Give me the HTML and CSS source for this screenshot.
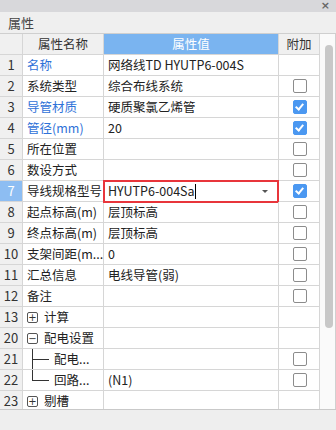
FILE: index.html
```html
<!DOCTYPE html>
<html>
<head>
    <meta charset="UTF-8">
    <title>属性</title>
    <link rel="stylesheet" href="styles.css">
</head>
<body>
    <!-- Window strip with close button -->
    <div class="top-bar"><span class="close">×</span></div>

    <!-- Panel title -->
    <div class="title-bar">属性</div>

    <!-- Property grid and scrollbar -->
    <div class="grid-area">
        <div class="grid">
            <div class="row head">
                <div class="cell idx"></div>
                <div class="cell name center">属性名称</div>
                <div class="cell value active center">属性值</div>
                <div class="cell attach">附加</div>
            </div>
            <div class="row">
                <div class="cell idx">1</div>
                <div class="cell name link">名称</div>
                <div class="cell value">网络线TD HYUTP6-004S</div>
                <div class="cell attach"></div>
            </div>
            <div class="row">
                <div class="cell idx">2</div>
                <div class="cell name">系统类型</div>
                <div class="cell value">综合布线系统</div>
                <div class="cell attach"><span class="check"></span></div>
            </div>
            <div class="row">
                <div class="cell idx">3</div>
                <div class="cell name link">导管材质</div>
                <div class="cell value">硬质聚氯乙烯管</div>
                <div class="cell attach"><span class="check on"></span></div>
            </div>
            <div class="row">
                <div class="cell idx">4</div>
                <div class="cell name link">管径(mm)</div>
                <div class="cell value">20</div>
                <div class="cell attach"><span class="check on"></span></div>
            </div>
            <div class="row">
                <div class="cell idx">5</div>
                <div class="cell name">所在位置</div>
                <div class="cell value"></div>
                <div class="cell attach"><span class="check"></span></div>
            </div>
            <div class="row">
                <div class="cell idx">6</div>
                <div class="cell name">数设方式</div>
                <div class="cell value"></div>
                <div class="cell attach"><span class="check"></span></div>
            </div>
            <div class="row">
                <div class="cell idx selected">7</div>
                <div class="cell name">导线规格型号</div>
                <div class="cell value editing">
                    <span>HYUTP6-004Sa</span><span class="caret"></span>
                    <span class="arrow"></span>
                    <span class="edit-box"></span>
                </div>
                <div class="cell attach"><span class="check on"></span></div>
            </div>
            <div class="row">
                <div class="cell idx">8</div>
                <div class="cell name">起点标高(m)</div>
                <div class="cell value">层顶标高</div>
                <div class="cell attach"><span class="check"></span></div>
            </div>
            <div class="row">
                <div class="cell idx">9</div>
                <div class="cell name">终点标高(m)</div>
                <div class="cell value">层顶标高</div>
                <div class="cell attach"><span class="check"></span></div>
            </div>
            <div class="row">
                <div class="cell idx">10</div>
                <div class="cell name">支架间距(m...</div>
                <div class="cell value">0</div>
                <div class="cell attach"><span class="check"></span></div>
            </div>
            <div class="row">
                <div class="cell idx">11</div>
                <div class="cell name">汇总信息</div>
                <div class="cell value">电线导管(弱)</div>
                <div class="cell attach"><span class="check"></span></div>
            </div>
            <div class="row">
                <div class="cell idx">12</div>
                <div class="cell name">备注</div>
                <div class="cell value"></div>
                <div class="cell attach"><span class="check"></span></div>
            </div>
            <div class="row">
                <div class="cell idx">13</div>
                <div class="cell name"><span class="toggle">+</span>计算</div>
                <div class="cell value"></div>
                <div class="cell attach"></div>
            </div>
            <div class="row">
                <div class="cell idx">20</div>
                <div class="cell name"><span class="toggle">−</span>配电设置</div>
                <div class="cell value"></div>
                <div class="cell attach"></div>
            </div>
            <div class="row">
                <div class="cell idx">21</div>
                <div class="cell name child"><span class="tree mid"></span>配电...</div>
                <div class="cell value"></div>
                <div class="cell attach"><span class="check"></span></div>
            </div>
            <div class="row">
                <div class="cell idx">22</div>
                <div class="cell name child"><span class="tree last"></span>回路...</div>
                <div class="cell value">(N1)</div>
                <div class="cell attach"><span class="check"></span></div>
            </div>
            <div class="row">
                <div class="cell idx">23</div>
                <div class="cell name"><span class="toggle">+</span>剔槽</div>
                <div class="cell value"></div>
                <div class="cell attach"></div>
            </div>
        </div>
        <div class="scrollbar"><div class="thumb"></div></div>
    </div>

    <!-- Empty footer strip -->
    <div class="footer"></div>
</body>
</html>
```

FILE: styles.css
```css
/* General Styling */
body {
    margin: 0;
    width: 336px;
    height: 430px;
    overflow: hidden;
    background-color: #eeeeee;
    font-family: 'Noto Sans CJK SC', 'Noto Sans', sans-serif;
    font-size: 12.5px;
    color: #222;
}

/* Top strip and title */
.top-bar {
    height: 12px;
    background-color: #d8d8db;
    display: flex;
    justify-content: flex-end;
    align-items: center;
}

.close {
    font-family: 'DejaVu Sans', sans-serif;
    font-size: 11px;
    line-height: 12px;
    color: #666;
    margin-right: 6px;
    font-weight: bold;
}

.title-bar {
    height: 21px;
    line-height: 21px;
    padding-left: 8px;
    background-color: #efefef;
    border-bottom: 1px solid #cfcfcf;
    color: #444;
    font-size: 13px;
}

/* Property grid */
.grid-area {
    display: flex;
    height: 375px;
    background-color: #fff;
    border-bottom: 1px solid #c9c9c9;
}

.grid {
    width: 320px;
    height: 375px;
    overflow: hidden;
}

.row {
    display: grid;
    grid-template-columns: 23px 81px 175px 41px;
    height: 21px;
}

.cell {
    box-sizing: border-box;
    height: 21px;
    line-height: 20px;
    border-right: 1px solid #d6d6d6;
    border-bottom: 1px solid #d6d6d6;
    white-space: nowrap;
    overflow: hidden;
}

.idx {
    background-color: #f0f0f0;
    text-align: center;
    color: #333;
    font-size: 13px;
}

.idx.selected {
    background-color: #8dbdf2;
    color: #fff;
}

.name {
    padding-left: 4px;
    display: flex;
    align-items: center;
}

.name.link {
    color: #2f72d8;
}

.value {
    padding-left: 4px;
    position: relative;
    overflow: visible;
}

.head .cell {
    background-color: #f0f0f0;
    color: #333;
}

.head .value.active {
    background-color: #7ab4f0;
    color: #fff;
}

.center {
    justify-content: center;
    text-align: center;
    padding-left: 0;
}

.attach {
    display: flex;
    align-items: center;
    justify-content: center;
    background-color: #fff;
}

.head .attach {
    background-color: #f0f0f0;
}

/* Checkboxes */
.check {
    box-sizing: border-box;
    width: 14px;
    height: 14px;
    border: 1.5px solid #8c8c8c;
    border-radius: 2px;
    margin-left: 1px;
    position: relative;
}

.check.on {
    background-color: #4b98f1;
    border-color: #4b98f1;
}

.check.on::after {
    content: '';
    position: absolute;
    left: 3px;
    top: 1px;
    width: 3px;
    height: 6px;
    border-right: 2px solid #fff;
    border-bottom: 2px solid #fff;
    transform: rotate(40deg);
}

/* Editing cell */
.editing {
    display: flex;
    align-items: center;
}

.caret {
    display: inline-block;
    width: 1px;
    height: 15px;
    background-color: #000;
}

.arrow {
    position: absolute;
    right: 10px;
    top: 9px;
    border-left: 3px solid transparent;
    border-right: 3px solid transparent;
    border-top: 3px solid #555;
}

.edit-box {
    position: absolute;
    left: -1px;
    top: -1px;
    right: -1px;
    bottom: -2px;
    border: 2px solid #e8353b;
}

/* Tree groups */
.toggle {
    box-sizing: border-box;
    width: 11px;
    height: 11px;
    border: 1px solid #555;
    border-radius: 2px;
    font-family: 'DejaVu Sans', sans-serif;
    font-size: 10px;
    line-height: 9px;
    text-align: center;
    margin-right: 6px;
    color: #333;
}

.child {
    position: relative;
    padding-left: 31px;
}

.tree {
    position: absolute;
    left: 9px;
    width: 16px;
    border-left: 1px solid #333;
    border-bottom: 1px solid #333;
}

.tree.mid {
    top: -5px;
    height: 15px;
}

.tree.mid::after {
    content: '';
    position: absolute;
    left: -1px;
    top: 15px;
    height: 12px;
    border-left: 1px solid #333;
}

.tree.last {
    top: -1px;
    height: 11px;
}

/* Scrollbar */
.scrollbar {
    width: 15px;
    border-right: 1px solid #d0d0d0;
    background-color: #fafafa;
    position: relative;
}

.thumb {
    position: absolute;
    left: 5px;
    top: 11px;
    width: 8px;
    height: 283px;
    border-radius: 4px;
    background-color: #c8c8c8;
}

.footer {
    height: 20px;
    background-color: #eeeeee;
}
```
